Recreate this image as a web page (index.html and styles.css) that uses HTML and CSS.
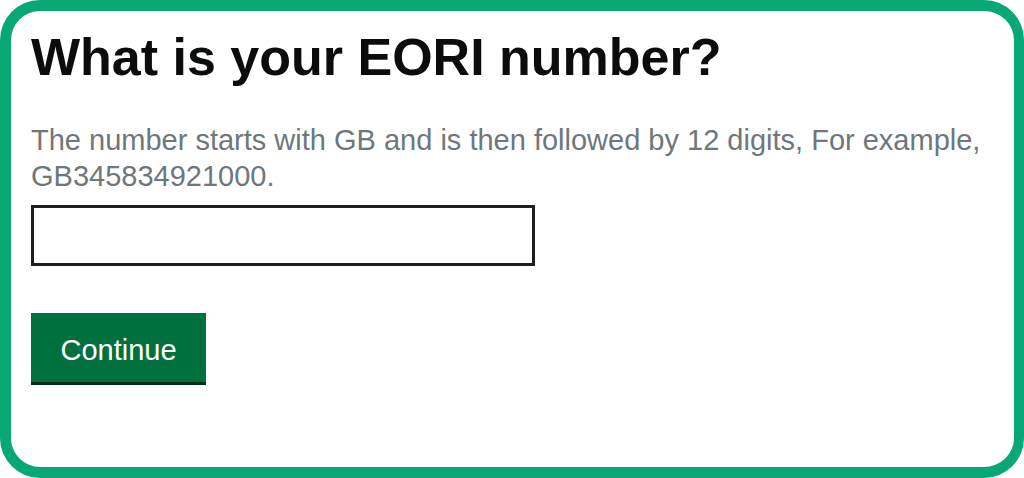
FILE: index.html
```html
<!DOCTYPE html>
<html lang="en">
<head>
<meta charset="utf-8">
<title>What is your EORI number?</title>
<link rel="stylesheet" href="styles.css">
</head>
<body>
<main class="frame">
  <h1 class="title">What is your EORI number?</h1>
  <p class="hint">The number starts with GB and is then followed by 12 digits, For example, GB345834921000.</p>
  <input class="field" type="text" aria-label="EORI number">
  <button class="btn" type="button">Continue</button>
</main>
</body>
</html>
```

FILE: styles.css
```css
html, body {
  margin: 0;
  padding: 0;
  background: #ffffff;
}
body {
  width: 1024px;
  height: 478px;
  overflow: hidden;
}
.frame {
  box-sizing: border-box;
  width: 1024px;
  height: 478px;
  border: 11px solid #07a876;
  border-right-width: 10px;
  border-radius: 40px;
  padding: 16px 0 0 20px;
  display: flex;
  flex-direction: column;
  align-items: flex-start;
  font-family: "Liberation Sans", Arial, sans-serif;
}
.title {
  margin: 0;
  font-size: 52px;
  line-height: 60px;
  font-weight: 700;
  color: #0b0c0c;
}
.hint {
  margin: 35px 0 0 0;
  font-size: 29px;
  line-height: 36px;
  color: #6f777b;
  width: 960px;
}
.field {
  box-sizing: border-box;
  margin: 11px 0 0 0;
  width: 504px;
  height: 61px;
  border: 3px solid #1e1f1f;
  background: #fff;
  padding: 0;
}
.btn {
  box-sizing: border-box;
  margin: 47px 0 0 0;
  width: 175px;
  height: 69px;
  border: 0;
  background: #00703c;
  box-shadow: 0 3px 0 #002d18;
  color: #ffffff;
  font-family: "Liberation Sans", Arial, sans-serif;
  font-size: 29px;
  padding: 5px 0 0 0;
}
```
